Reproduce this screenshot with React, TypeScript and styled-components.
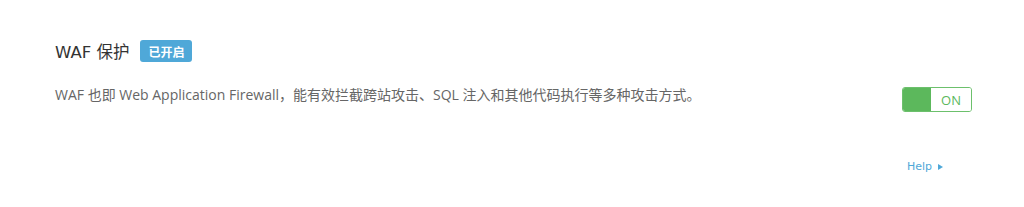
import React from 'react';
import styled, { createGlobalStyle } from 'styled-components';

const Global = createGlobalStyle`
    html, body {
        margin: 0;
        padding: 0;
        background: #fff;
    }
    body {
        font-family: 'DejaVu Sans', 'Noto Sans CJK SC', sans-serif;
    }
`;

const Panel = styled.div`
    width: 1024px;
    height: 207px;
    box-sizing: border-box;
    padding: 39px 52px 0 55px;
    display: flex;
    flex-direction: column;
`;

const TitleRow = styled.div`
    display: flex;
    align-items: center;
    gap: 11px;
    height: 24px;
`;

const Title = styled.h3`
    margin: 0;
    font-size: 16.5px;
    font-weight: normal;
    color: #333;
`;

const Badge = styled.span`
    display: inline-flex;
    align-items: center;
    height: 22px;
    padding: 0 8px;
    border-radius: 3px;
    background: #4fa8d8;
    color: #fff;
    font-family: 'Noto Sans CJK SC', sans-serif;
    font-size: 12px;
    font-weight: bold;
`;

const Body = styled.div`
    display: flex;
    justify-content: space-between;
    align-items: flex-start;
    margin-top: 22px;
`;

const Desc = styled.p`
    margin: 0;
    font-family: 'Open Sans', 'Noto Sans CJK SC', sans-serif;
    font-size: 14px;
    line-height: 20px;
    color: #666;
`;

const Switch = styled.div`
    display: flex;
    width: 70px;
    height: 25px;
    box-sizing: border-box;
    border: 1px solid #6cc06c;
    border-radius: 3px;
    overflow: hidden;
    margin-top: 2px;
`;

const Knob = styled.span`
    width: 28px;
    background: #5cb85c;
`;

const SwitchLabel = styled.span`
    flex: 1;
    display: flex;
    align-items: center;
    justify-content: center;
    font-family: 'Open Sans', sans-serif;
    font-size: 13px;
    color: #5cb85c;
    background: #fff;
`;

const HelpRow = styled.div`
    display: flex;
    justify-content: flex-end;
    margin-top: 48px;
    padding-right: 29px;
`;

const HelpLink = styled.a`
    display: flex;
    align-items: center;
    gap: 6px;
    font-size: 11px;
    color: #4fa8d8;
    text-decoration: none;
    cursor: pointer;
`;

const Arrow = styled.span`
    width: 0;
    height: 0;
    border-top: 3px solid transparent;
    border-bottom: 3px solid transparent;
    border-left: 5px solid #4fa8d8;
`;

export default function App() {
    return (
        <>
            <Global />
            <Panel>
                <TitleRow>
                    <Title>WAF 保护</Title>
                    <Badge>已开启</Badge>
                </TitleRow>
                <Body>
                    <Desc>WAF 也即 Web Application Firewall，能有效拦截跨站攻击、SQL 注入和其他代码执行等多种攻击方式。</Desc>
                    <Switch>
                        <Knob />
                        <SwitchLabel>ON</SwitchLabel>
                    </Switch>
                </Body>
                <HelpRow>
                    <HelpLink>
                        Help <Arrow />
                    </HelpLink>
                </HelpRow>
            </Panel>
        </>
    );
}
